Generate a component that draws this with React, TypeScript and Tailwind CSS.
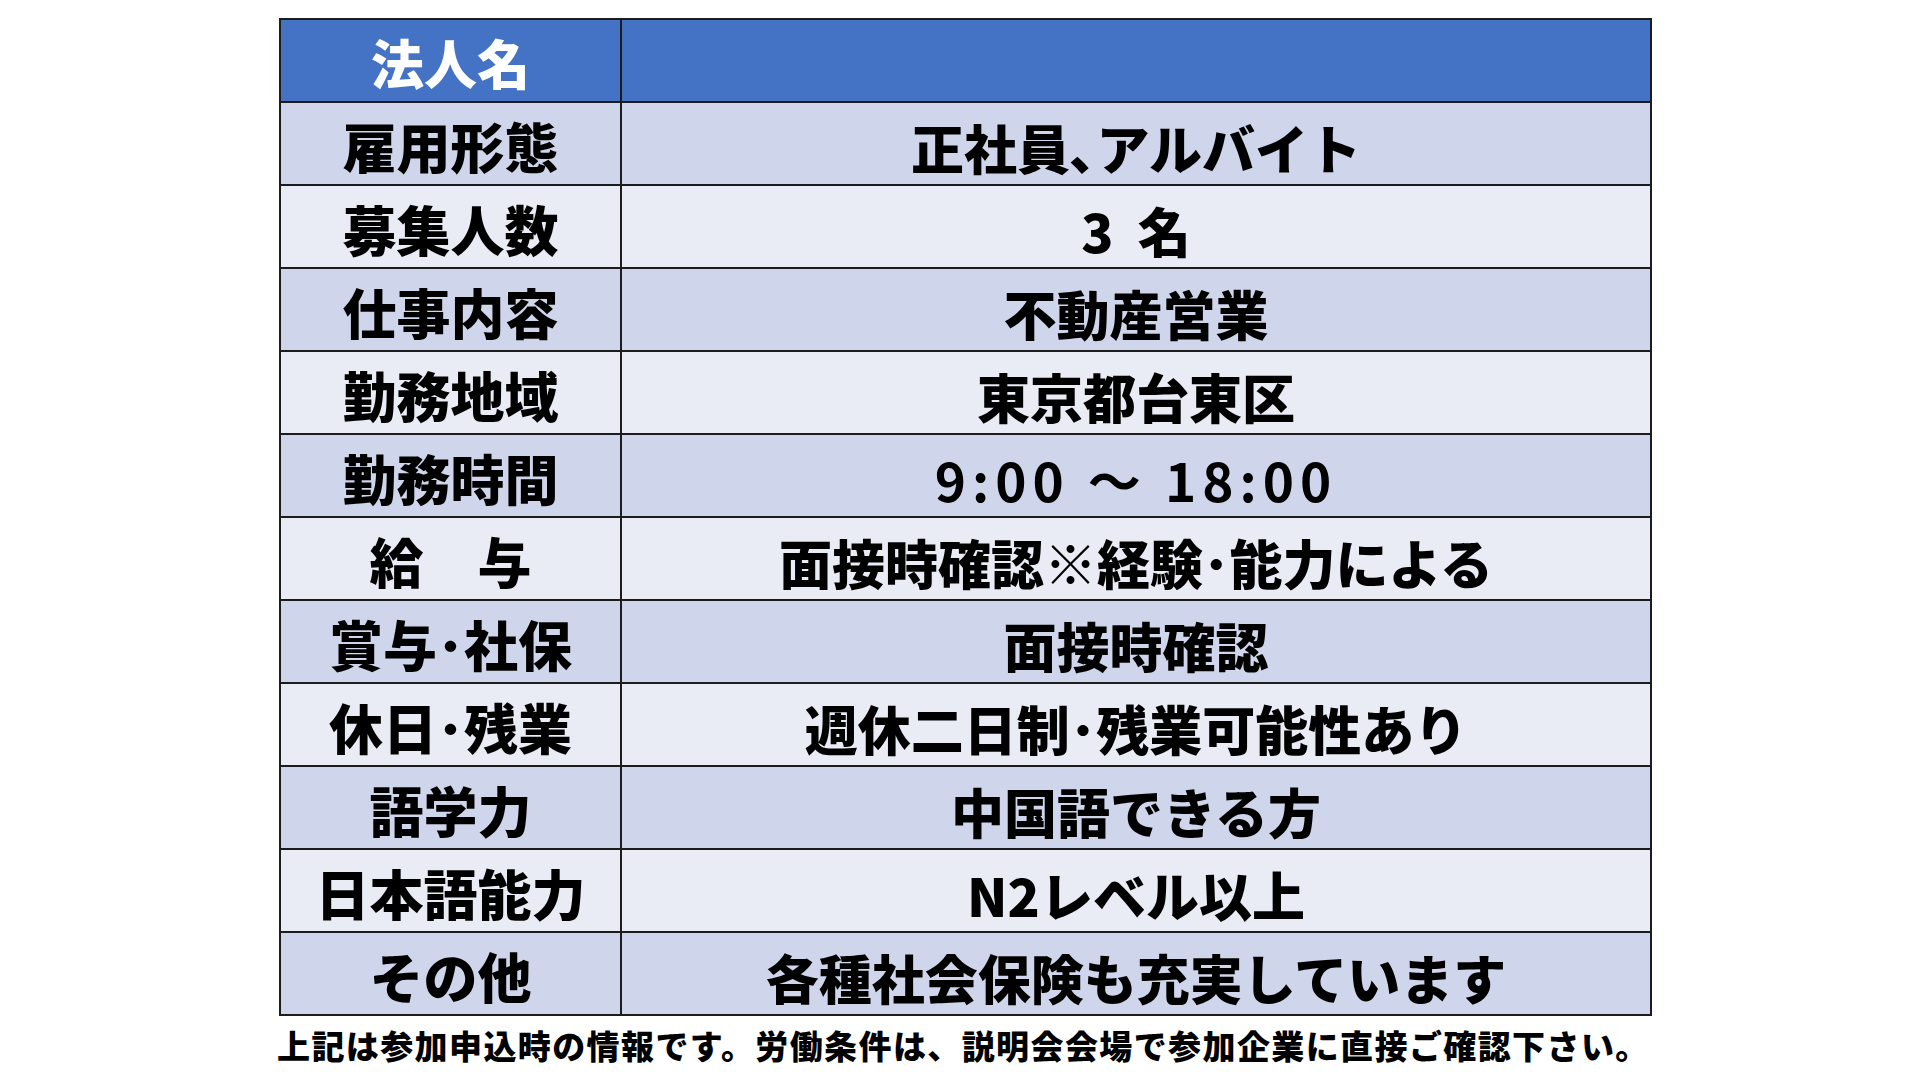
// 「・」「、」 are set half-width in the original, so the half-width forms are used
const rows = [
  { label: "雇用形態", value: "正社員､アルバイト" },
  { label: "募集人数", value: "3\u00a0\u00a0名" },
  { label: "仕事内容", value: "不動産営業" },
  { label: "勤務地域", value: "東京都台東区" },
  { label: "勤務時間", value: "9:00 ～ 18:00", wide: true },
  { label: "給　与", value: "面接時確認※経験･能力による" },
  { label: "賞与･社保", value: "面接時確認" },
  { label: "休日･残業", value: "週休二日制･残業可能性あり" },
  { label: "語学力", value: "中国語できる方" },
  { label: "日本語能力", value: "N2レベル以上" },
  { label: "その他", value: "各種社会保険も充実しています" },
];

const font = { fontFamily: '"Noto Sans CJK JP", "Noto Sans", sans-serif' };

export default function App() {
  return (
    <div className="w-[1920px] h-[1080px] bg-white overflow-hidden" style={font}>
      <div className="ml-[279px] mt-[18px] w-[1373px]">
        <div className="border-2 border-[#1c1c1c]">
          {/* header */}
          <div className="flex h-[83px] bg-[#4472c4] border-b-2 border-[#1c1c1c]">
            <div className="w-[341px] shrink-0 border-r-2 border-[#1c1c1c] flex items-center justify-center pt-1 text-white text-[53px] font-black leading-none">
              法人名
            </div>
            <div className="flex-1" />
          </div>

          {rows.map((row, i) => {
            const last = i === rows.length - 1;
            const bg = i % 2 === 0 ? "bg-[#cfd5ea]" : "bg-[#e9ebf5]";
            return (
              <div
                key={row.label}
                className={`flex ${bg} ${last ? "h-[81px]" : "h-[83px] border-b-2 border-[#1c1c1c]"}`}
              >
                <div className="w-[341px] shrink-0 border-r-2 border-[#1c1c1c] flex items-center justify-center pt-1 text-black text-[54px] font-black leading-none whitespace-pre">
                  {row.label}
                </div>
                <div
                  className={`flex-1 flex items-center justify-center pt-2 text-black text-[53px] leading-none whitespace-pre ${
                    row.wide ? "font-bold tracking-[6px]" : "font-black"
                  }`}
                >
                  {row.value}
                </div>
              </div>
            );
          })}
        </div>

        <p className="mt-[13px] -ml-[2px] text-[33px] font-black leading-none tracking-[1.4px] text-black whitespace-nowrap">
          上記は参加申込時の情報です。労働条件は、説明会会場で参加企業に直接ご確認下さい。
        </p>
      </div>
    </div>
  );
}
